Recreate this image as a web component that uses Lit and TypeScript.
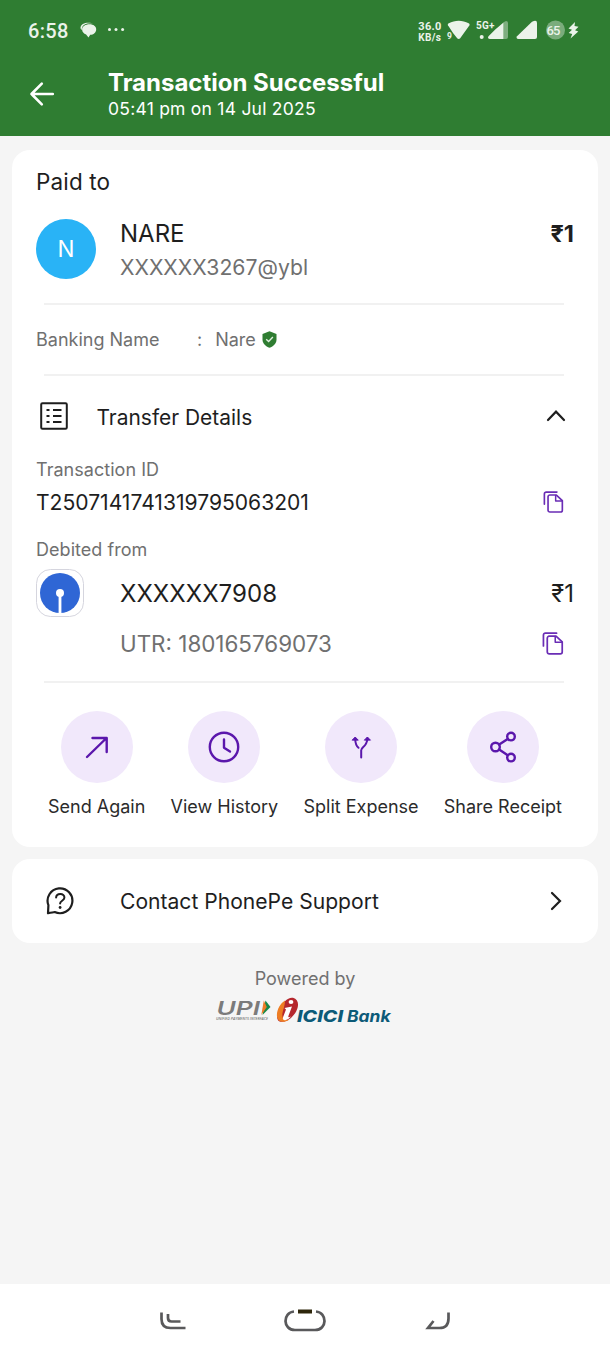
import { LitElement, html, svg, css } from "lit";
import { customElement, property } from "lit/decorators.js";

const copyIcon = (size: number) => html`<svg width=${size} height=${size} viewBox="0 0 24 24" fill="none" stroke="#6a2db5" stroke-width="1.8" stroke-linejoin="round" stroke-linecap="round">
  <path d="M1.500 14.500V3.200a2 2 0 0 1 2-2H15.200"/>
  <path d="M7.500 4.400h7.100l6.500 6v10.500a2 2 0 0 1-2 2H7.500a2 2 0 0 1-2-2V6.400a2 2 0 0 1 2-2z"/>
  <path d="M13.800 4.800v6h7" stroke-width="1.600"/>
</svg>`;

const actionIcons: Record<string, unknown> = {
  send: svg`<path d="M26 46 45.500 27M31.500 27H45.700V41"/>`,
  history: svg`<circle cx="36" cy="36" r="14.2"/><path d="M36 28.500v8.300l6 3.700"/>`,
  split: svg`<path d="M36.200 46.500v-7.200c0-3.500 5.800-3.500 6.200-11.800M30.200 28c.2 5.500 1 7 3.300 8.800" stroke-width="2"/><path d="M27.400 28.900 30.200 26l2.800 2.900zM39.600 28.900l2.800-2.900 2.800 2.900z" fill="#5b17ac" stroke-width="1"/>`,
  share: svg`<circle cx="28.500" cy="36" r="4.300"/><circle cx="44" cy="25.600" r="3.800"/><circle cx="44" cy="46.600" r="3.800"/><path d="m32.200 33.600 8.500-5.700M32.200 38.500l8.500 5.700"/>`,
};

@customElement("receipt-action")
class ReceiptAction extends LitElement {
  @property() icon = "send";
  @property() label = "";
  static styles = css`
    :host { display: flex; flex-direction: column; align-items: center; }
    .disc { display: block; width: 72px; height: 72px; border-radius: 50%; background: #f1e8fb; }
    .label { font-size: 18px; line-height: 24px; margin-top: 12px; white-space: nowrap; color: #2b2b2b; }
  `;
  render() {
    return html`
      <svg class="disc" viewBox="0 0 72 72" fill="none" stroke="#5b17ac" stroke-width="2.4" stroke-linecap="round" stroke-linejoin="round">${actionIcons[this.icon]}</svg>
      <span class="label">${this.label}</span>`;
  }
}

@customElement("app-root")
class AppRoot extends LitElement {
  static styles = css`
    :host { display: flex; flex-direction: column; height: 1356px; background: #f5f5f5; color: #1e1e1e; font-family: Inter, sans-serif; overflow: hidden; }
    svg { display: block; flex: none; }
    .top { height: 136px; flex: none; background: #2f7d32; color: #fff; }
    .status { height: 60px; display: flex; align-items: center; color: #ebf3ea; padding-left: 28px; }
    .clock { font: 500 20px/24px Roboto, sans-serif; letter-spacing: 0.3px; width: 52px; margin-top: 2px; }
    .status-right { margin-left: auto; }
    .title-row { display: flex; }
    .back { margin: 20px 52px 0 28px; }
    .title { margin-top: 8px; font-size: 24px; line-height: 30px; font-weight: 700; white-space: nowrap; }
    .when { font-size: 17.5px; line-height: 22px; letter-spacing: 0.24px; }
    .card { margin: 14px 12px 0; height: 697px; background: #fff; border-radius: 18px; padding: 0 24px; box-sizing: border-box; flex: none; }
    .paid { font-size: 22.500px; line-height: 64px; letter-spacing: 0.15px; }
    .payee { display: flex; height: 89px; }
    .avatar { width: 60px; height: 60px; border-radius: 50%; background: #29b3f6; color: #fff; text-align: center; font-size: 22.500px; line-height: 60px; margin: 5px 24px 0 0; }
    .name { font-size: 24px; line-height: 32px; margin-top: 4px; }
    .vpa { font-size: 21.200px; line-height: 35px; color: #707070; }
    .amount { margin-left: auto; font-size: 23.500px; line-height: 40px; font-weight: 700; }
    .rule { height: 2px; background: #f1f1f1; margin: 0 10px 0 8px; }
    .banking { display: flex; align-items: center; height: 69px; font-size: 18px; color: #707070; }
    .banking-label { width: 161px; }
    .banking-value { margin-left: 13px; margin-right: 6px; }
    .details { display: flex; align-items: center; height: 80px; }
    .details-title { font-size: 20.950px; margin-left: 24.500px; margin-top: 2px; }
    .push { margin-left: auto; }
    .caption { font-size: 18px; line-height: 26px; padding-top: 1px; color: #707070; letter-spacing: 0.04px; }
    .txn { display: flex; align-items: center; height: 39px; font-size: 21.080px; }
    .txn .copy { padding-bottom: 1px; margin-right: 9px; }
    .debited { margin-top: 14px; }
    .account { display: flex; height: 61px; margin-top: 6px; }
    .bank { width: 48px; height: 48px; }
    .number { font-size: 24.100px; line-height: 50px; margin-left: 36px; }
    .debit { margin-left: auto; font-size: 24px; line-height: 50px; }
    .utr { display: flex; align-items: center; height: 26px; padding-left: 84px; font-size: 22.400px; color: #707070; }
    .utr-gap { height: 25px; }
    .copy { margin: 0 9px 0 auto; }
    .actions { display: flex; justify-content: space-between; padding: 28px 12px 0 12px; }
    .support { margin: 12px 12px 0; height: 84px; flex: none; background: #fff; border-radius: 18px; display: flex; align-items: center; padding: 0 32px 0 34px; }
    .support-text { font-size: 21.100px; margin-left: 46px; margin-top: 1px; }
    .powered { text-align: center; font-size: 18px; line-height: 24px; margin-top: 24px; color: #707070; }
    .logos { margin: 3px 0 0 212px; }
    .nav { margin-top: auto; height: 72px; background: #fff; flex: none; }
  `;

  render() {
    return html`
      <header class="top">
        <div class="status">
          <span class="clock">6:58</span>
          <svg width="46" height="20" viewBox="80 20 46 20" fill="#ebf3ea">
            <path d="M80.500 27.500c.3-3 3.500-4.800 8-4.800 2 0 3.500.3 4.500.8-5-.8-9.500.3-10.800 3.600-.6 1.600-.3 3-.3 3-.9-.6-1.500-1.500-1.400-2.600z"/>
            <path d="M89.500 24.200c4 0 6.700 2.200 6.700 5.200s-2.700 5.200-6 5.400l-1.700 2.600-2.400-3c-2.300-.8-4-2.700-4-5 0-3 3.400-5.200 7.400-5.200z"/>
            <circle cx="109.500" cy="29.500" r="1.500"/><circle cx="116" cy="29.500" r="1.500"/><circle cx="122.600" cy="29.500" r="1.500"/>
          </svg>
          <svg class="status-right" width="210" height="60" viewBox="400 0 210 60" fill="#ebf3ea" font-family="Roboto" font-weight="700">
            <text x="418.300" y="30" font-size="11" textLength="23">36.0</text>
            <text x="418.300" y="40.500" font-size="10" textLength="22.500">KB/s</text>
            <text x="447" y="38.500" font-size="8.500">9</text>
            <path d="M448.600 26.200c-1.200-1-1-2.200.2-2.900 6-3.500 13.800-3.500 19.800 0 1.200.7 1.400 1.900.2 2.900l-8.600 12c-.8 1-2.200 1-3 0l-4-5z"/>
            <text x="476" y="28.800" font-size="10" textLength="18.500">5G+</text>
            <circle cx="481.700" cy="37" r="2"/>
            <path d="M503.500 22.200 506 21q2 0 2 2v14q0 2-2 2h-2.500z" opacity=".42"/>
            <path d="M503.500 22.400V39H490q-3-.4-1.500-2.700l7-7 3-2.500z"/>
            <path d="M537 23v14q0 2-2 2h-16.500q-3-.4-1.500-2.700l15-14.500q5-2.800 5 1.200z"/>
            <circle cx="555.500" cy="30" r="9.500" opacity=".4"/>
            <text x="546.500" y="35" font-size="13" font-weight="500" textLength="14">65</text>
            <path d="M575 22 568.500 28.500l3.500 1.200-3.300 3.300 3.500 1-1.700 4.500 7.800-7-3.300-1.200 3.500-3.500-4-.8z"/>
          </svg>
        </div>
        <div class="title-row">
          <svg class="back" width="28" height="28" viewBox="0 0 28 28" fill="none" stroke="#fff" stroke-width="2.600" stroke-linecap="round" stroke-linejoin="round"><path d="M24.800 14H3.500M13.800 3.700 3.500 14l10.300 10.300"/></svg>
          <div>
            <div class="title">Transaction Successful</div>
            <div class="when">05:41 pm on 14 Jul 2025</div>
          </div>
        </div>
      </header>

      <section class="card">
        <div class="paid">Paid to</div>
        <div class="payee">
          <div class="avatar">N</div>
          <div><div class="name">NARE</div><div class="vpa">XXXXXX3267@ybl</div></div>
          <div class="amount">₹1</div>
        </div>
        <div class="rule"></div>
        <div class="banking">
          <span class="banking-label">Banking Name</span><span>:</span><span class="banking-value">Nare</span>
          <svg width="15" height="17" viewBox="0 0 15 17"><path d="M7.500.3 14.500 3v5.500c0 4-3 6.900-7 8.200-4-1.300-7-4.200-7-8.200V3z" fill="#2f7d32"/><path d="m4.200 8.300 2.400 2.300 4.300-4.500" fill="none" stroke="#dff0df" stroke-width="1.400"/></svg>
        </div>
        <div class="rule"></div>
        <div class="details">
          <svg width="36" height="36" viewBox="0 0 36 36" fill="none" stroke="#1e1e1e" stroke-width="2"><rect x="5.200" y="5.200" width="25.600" height="25.600" rx="1.300"/><path d="M10.500 12h3M10.500 18h3M10.500 24h3M17 12h8.500M17 18h8.500M17 24h8.500" stroke-width="2.200"/></svg>
          <span class="details-title">Transfer Details</span>
          <svg class="push" width="36" height="36" viewBox="0 0 36 36" fill="none" stroke="#1e1e1e" stroke-width="2.200" stroke-linecap="round"><path d="m10 22 8-8.300 8 8.300"/></svg>
        </div>
        <div class="caption">Transaction ID</div>
        <div class="txn"><span class="txn-id">T2507141741319795063201</span><span class="copy">${copyIcon(22)}</span></div>
        <div class="caption debited">Debited from</div>
        <div class="account">
          <svg class="bank" viewBox="0 0 48 48"><rect x=".5" y=".5" width="47" height="47" rx="14" fill="#fff" stroke="#d5d5de"/><circle cx="24" cy="24" r="20" fill="#2f66d5"/><circle cx="24" cy="24" r="4" fill="#fff"/><path d="M24 24v20.500" stroke="#fff" stroke-width="2.800"/></svg>
          <span class="number">XXXXXX7908</span>
          <span class="debit">₹1</span>
        </div>
        <div class="utr"><span class="utr-text">UTR: 180165769073</span><span class="copy">${copyIcon(23)}</span></div>
        <div class="utr-gap"></div>
        <div class="rule"></div>
        <div class="actions">
          <receipt-action icon="send" label="Send Again"></receipt-action>
          <receipt-action icon="history" label="View History"></receipt-action>
          <receipt-action icon="split" label="Split Expense"></receipt-action>
          <receipt-action icon="share" label="Share Receipt"></receipt-action>
        </div>
      </section>

      <section class="support">
        <svg width="28" height="28" viewBox="0 0 28 28" fill="none" stroke="#1e1e1e" stroke-width="2.200" stroke-linecap="round" stroke-linejoin="round"><path d="M2 26.200l.4-8A12.400 12.400 0 1 1 8.700 25q-1.500.2-6.700 1.200z"/><path d="M10.100 10.500c.3-5 8.600-4.700 8.300.2-.2 3.100-4.300 3-4.300 5.800" stroke-width="2"/><circle cx="14.100" cy="20.500" r="1.400" fill="#1e1e1e" stroke="none"/></svg>
        <span class="support-text">Contact PhonePe Support</span>
        <svg class="push" width="20" height="24" viewBox="0 0 20 24" fill="none" stroke="#1e1e1e" stroke-width="2.200" stroke-linecap="round"><path d="m6 4 8 8-8 8"/></svg>
      </section>

      <div class="powered">Powered by</div>
      <svg class="logos" width="190" height="34" viewBox="212 994 190 34">
        <text x="216.500" y="1014.500" font-family="Inter" font-style="italic" font-weight="600" font-size="19" fill="#7b7b7b" textLength="43.500" lengthAdjust="spacingAndGlyphs">UPI</text>
        <path d="m265.500 1000.500 5 6.500-8 8z" fill="#17884a"/><path d="m263.800 1000.500 3 6.500-5.500 8z" fill="#ee7b26"/>
        <text x="216" y="1020" font-family="Open Sans" font-style="italic" font-weight="600" font-size="4" fill="#777" textLength="52" lengthAdjust="spacingAndGlyphs">UNIFIED PAYMENTS INTERFACE</text>
        <path d="M293 997.800c5.500 1.200 6.500 7.500 3 14-3.500 6.300-10 10.700-15.500 10-4-.7-4.500-6-1-12.500 3-6.500 8.500-12.500 13.500-11.500z" fill="#b5272d"/>
        <path d="M285 1000.500c-5 3-9 10.500-7.900 16.500 1 5.300 6.500 6.300 12 2.800-6 .9-7.500-2.300-6.500-7.300.8-4 2.500-7.500 2.400-12z" fill="#ee7d23"/>
        <path d="m284.500 1008 7.500-1.500-3.600 9.500q-.7 2 2.600.5-3.500 4.500-7 3.500-2-.5-.5-4l2.500-6.500z" fill="#fff"/><ellipse cx="291" cy="1002" rx="2.400" ry="1.900" fill="#fff"/>
        <text x="297" y="1021.700" font-family="Inter" font-style="italic" font-weight="800" font-size="16" fill="#0c5a78" textLength="46" lengthAdjust="spacingAndGlyphs">ICICI</text>
        <text x="347" y="1021.700" font-family="Inter" font-style="italic" font-weight="700" font-size="15.500" fill="#0c5a78" textLength="43.500" lengthAdjust="spacingAndGlyphs">Bank</text>
      </svg>

      <svg class="nav" width="610" height="72" viewBox="0 1284 610 72" fill="none" stroke="#59595b" stroke-width="2.700">
        <path d="M161.500 1312.500v6.500q0 9 9 9H185.500M168 1314v4q0 3.500 3.500 3.500h9"/>
        <path d="M294 1311.500c-11.500 1-11.500 18.500 1 18.500h20c12.500 0 12.500-17.500 1-18.500"/><path d="M298 1311.500h14" stroke="#2e260b" stroke-width="4"/>
        <path d="M448.500 1312.500v6q0 9.500-9 9.500H428l5.500-7"/>
      </svg>
    `;
  }
}
